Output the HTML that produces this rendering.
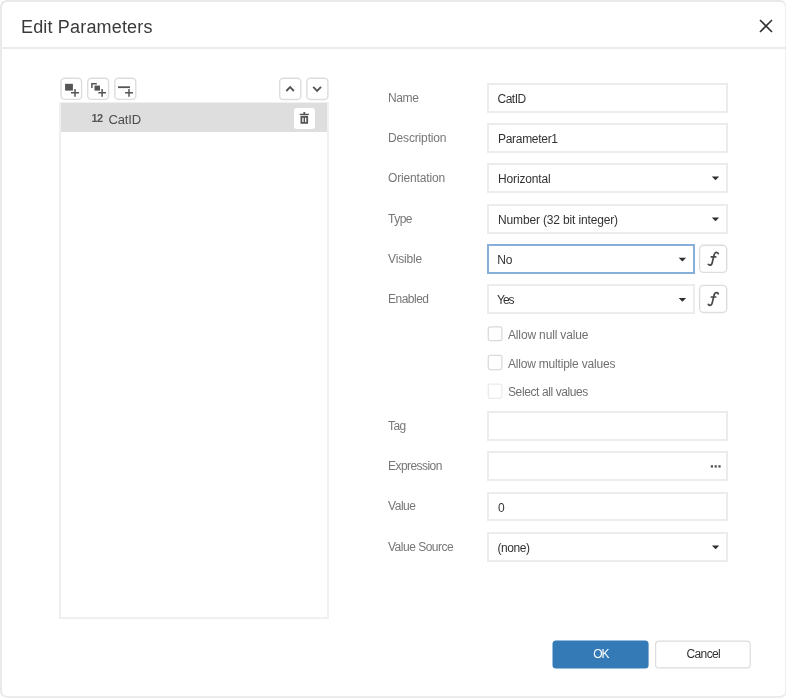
<!DOCTYPE html>
<html><head><meta charset="utf-8">
<style>
*{box-sizing:border-box;margin:0;padding:0}
html,body{width:786px;height:698px;overflow:hidden;background:#fff}
body{font-family:"Liberation Sans",sans-serif;font-size:12px;color:#333;position:relative}
.dlg{position:absolute;left:0;top:0;width:787px;height:698px;border:2px solid #e9e9e9;border-right-color:#efefef;border-bottom-color:#ececec;border-radius:7px;background:#fff}
.abs{position:absolute}
.title{left:21px;top:15px;font-size:18px;line-height:24px;color:#3a3a3a;letter-spacing:0.17px}
.hline{left:0;top:47px;width:786px;height:2px;background:#ebebeb}
.tb{width:23px;height:23px;border:1px solid #dcdcdc;border-radius:4px;background:#fff}
.list{left:59px;top:102px;width:270px;height:517px;border:2px solid #f0f0f0;background:#fff}
.row{left:61px;top:103px;width:266px;height:29px;background:#dedede}
.lbl{left:388px;color:#767676;line-height:16px;font-size:12px;letter-spacing:-0.15px}
.inp{left:487px;width:241px;height:30px;border:2px solid #ececec;background:#fff;padding-left:9px;line-height:29px;color:#333;font-size:12px;letter-spacing:-0.15px}
.arrow{width:0;height:0;border-left:3.7px solid transparent;border-right:3.7px solid transparent;border-top:3.8px solid #2e2e2e}
.fbtn{left:698px;width:29px;height:29px;border:1px solid #dcdcdc;border-radius:4px;background:#fff}
.f{position:absolute;left:9px;top:4px;font-family:"Liberation Serif",serif;font-style:italic;font-weight:bold;font-size:17px;line-height:20px;color:#444}
.cb{left:488px;width:15px;height:15px;border:1px solid #d8d8d8;border-radius:2px;background:#fff}
.cbl{left:508px;color:#707070;line-height:16px}
.btn{top:640px;width:96px;height:29px;text-align:center;line-height:29px;font-size:12px}
</style></head><body>
<div class="dlg"></div>
<div id="layer" style="position:absolute;left:0;top:0;width:786px;height:698px;will-change:transform">
<div class="abs title">Edit Parameters</div>
<svg class="abs" style="left:759px;top:19.4px" width="14" height="14" viewBox="0 0 14 14"><path d="M1 1 L13 13 M13 1 L1 13" stroke="#333" stroke-width="1.6" fill="none"/></svg>
<div class="abs hline"></div>

<!-- toolbar -->
<svg class="abs" style="left:58px;top:76px" width="280" height="56" viewBox="58 76 280 56">
 <g fill="#fff" stroke="#dddddd" stroke-width="1.4">
  <rect x="61" y="78.3" width="20.6" height="21.1" rx="3.6"/>
  <rect x="87.7" y="78.3" width="20.9" height="21.1" rx="3.6"/>
  <rect x="114.8" y="78.3" width="21" height="21.1" rx="3.6"/>
  <rect x="279.7" y="78.3" width="21.1" height="21.2" rx="3.6"/>
  <rect x="306.8" y="78.3" width="21.1" height="21.2" rx="3.6"/>
 </g>
 <g fill="#555" stroke="none">
  <rect x="65.1" y="83.8" width="7.8" height="6.8"/>
  <rect x="94.5" y="85.6" width="5.5" height="5"/>
 </g>
 <g fill="none" stroke="#555" stroke-width="1.5">
  <path d="M71 92.7H79M75 88.9V96.7"/>
  <path d="M91.9 88V83.8H96.8"/>
  <path d="M98.3 92.7H106M102.1 88.9V96.7"/>
  <path d="M118 87.2H130" stroke-width="1.8"/>
  <path d="M125.1 92.7H133M129 88.9V96.7"/>
  <path d="M286.3 91L290.1 87L293.9 91" stroke-width="1.85"/>
  <path d="M313.2 86.8L317.1 90.8L321 86.8" stroke-width="1.85"/>
 </g>
</svg>

<div class="abs list"></div>
<div class="abs row"></div>
<div class="abs" style="left:91.5px;top:112px;font-size:11px;font-weight:bold;color:#555;line-height:12px;letter-spacing:-0.7px">12</div>
<div class="abs" style="left:108.4px;top:112px;font-size:13px;color:#4c4c4c;line-height:16px;letter-spacing:-0.15px">CatID</div>
<div class="abs" style="left:294px;top:107.5px;width:21px;height:21px;background:#fff;border-radius:3px"></div>
<svg class="abs" style="left:294px;top:107px" width="22" height="22" viewBox="294 107 22 22">
 <path d="M299.7 113.7H308.9V114.9H299.7Z M303.4 112H305.2V113.7H303.4Z" fill="#555"/>
 <path fill-rule="evenodd" d="M300.5 115.7H308.1V123.8H300.5Z M302.3 117.7V122.1H303.6V117.7Z M305 117.7V122.1H306.3V117.7Z" fill="#555"/>
</svg>

<!-- form -->
<div class="abs lbl" style="top:90px;letter-spacing:-0.4px">Name</div>
<div class="abs inp" style="top:83px;letter-spacing:-0.5px;padding-left:8.5px">CatID</div>
<div class="abs lbl" style="top:130px">Description</div>
<div class="abs inp" style="top:123px;letter-spacing:-0.3px">Parameter1</div>
<div class="abs lbl" style="top:170px">Orientation</div>
<div class="abs inp" style="top:163px">Horizontal</div>
<div class="abs lbl" style="top:211px;letter-spacing:-0.5px">Type</div>
<div class="abs inp" style="top:204px">Number (32 bit integer)</div>
<div class="abs lbl" style="top:251px">Visible</div>
<div class="abs inp" style="top:244px;width:208px;border-color:#88aedb;padding-left:8.3px">No</div>
<div class="abs lbl" style="top:291px;letter-spacing:-0.5px">Enabled</div>
<div class="abs inp" style="top:284px;width:208px;letter-spacing:-1px;padding-left:8px">Yes</div>
<svg class="abs" style="left:696px;top:242px" width="34" height="74" viewBox="696 242 34 74">
 <g fill="#fff" stroke="#dddddd" stroke-width="1.4">
  <rect x="699.6" y="245.3" width="27.1" height="27.1" rx="4"/>
  <rect x="699.6" y="285.4" width="27.1" height="27.1" rx="4"/>
 </g>
 <g fill="none" stroke="#484848" stroke-width="1.7" stroke-linecap="round">
  <path id="fp" d="M718.3 253.7C717.7 252.4 716.2 252.1 715.2 252.9C714.2 253.7 713.9 255.2 713.6 256.9L712.3 262.5C711.9 264.3 711.3 265.2 710 265.2C709.2 265.2 708.7 264.8 708.3 264.3M711.3 256.9H715.7"/>
  <path d="M718.3 253.7C717.7 252.4 716.2 252.1 715.2 252.9C714.2 253.7 713.9 255.2 713.6 256.9L712.3 262.5C711.9 264.3 711.3 265.2 710 265.2C709.2 265.2 708.7 264.8 708.3 264.3M711.3 256.9H715.7" transform="translate(0,40.1)"/>
 </g>
</svg>

<svg class="abs" style="left:486px;top:324px" width="20" height="78" viewBox="486 324 20 78">
 <g fill="#fff" stroke-width="1.3">
  <rect x="488.3" y="326.8" width="13.6" height="13.9" rx="1.8" stroke="#dadada"/>
  <rect x="488.3" y="355.3" width="13.6" height="14.3" rx="1.8" stroke="#dadada"/>
  <rect x="488.3" y="384.1" width="13.6" height="14.3" rx="1.8" stroke="#ebebeb"/>
 </g>
</svg>
<div class="abs cbl" style="top:327px;letter-spacing:-0.15px">Allow null value</div>
<div class="abs cbl" style="top:356px;letter-spacing:-0.2px">Allow multiple values</div>
<div class="abs cbl" style="top:384px;letter-spacing:-0.4px">Select all values</div>

<div class="abs lbl" style="top:418px;letter-spacing:-0.55px">Tag</div>
<div class="abs inp" style="top:411px"></div>
<div class="abs lbl" style="top:458px;letter-spacing:-0.55px">Expression</div>
<div class="abs inp" style="top:451px"></div>
<div class="abs lbl" style="top:498px;letter-spacing:-0.45px">Value</div>
<div class="abs inp" style="top:492px;height:29px;line-height:28px">0</div>
<div class="abs lbl" style="top:539px;letter-spacing:-0.5px">Value Source</div>
<div class="abs inp" style="top:532px;letter-spacing:-0.45px;padding-left:8.5px">(none)</div>

<svg class="abs" style="left:710px;top:464px" width="12" height="5" viewBox="0 0 12 5"><g fill="#555"><rect x="0.8" y="1.2" width="2.2" height="2.4"/><rect x="4.6" y="1.2" width="2.2" height="2.4"/><rect x="8.4" y="1.2" width="2.2" height="2.4"/></g></svg>

<svg class="abs" style="left:670px;top:170px" width="60" height="390" viewBox="670 170 60 390"><path d="M711.8 176.4H719.2L715.5 180.3ZM711.8 217.4H719.2L715.5 221.3ZM678.7 257.7H686.1L682.4 261.6ZM678.7 297.9H686.1L682.4 301.8ZM711.9 545.4H719.3L715.6 549.3Z" fill="#2e2e2e"/></svg>
<svg class="abs" style="left:550px;top:638px" width="204" height="34" viewBox="550 638 204 34">
 <rect x="552.5" y="640.5" width="96.1" height="28" rx="3.5" fill="#337ab7"/>
 <rect x="655.6" y="641.1" width="94.6" height="26.8" rx="3.2" fill="#fff" stroke="#dcdcdc" stroke-width="1.2"/>
</svg>
<div class="abs btn" style="left:552.5px;color:#fff;letter-spacing:-0.9px;padding-left:0.9px">OK</div>
<div class="abs btn" style="left:655px;color:#333;letter-spacing:-0.65px;padding-left:0.65px">Cancel</div>
</div>
</body></html>
